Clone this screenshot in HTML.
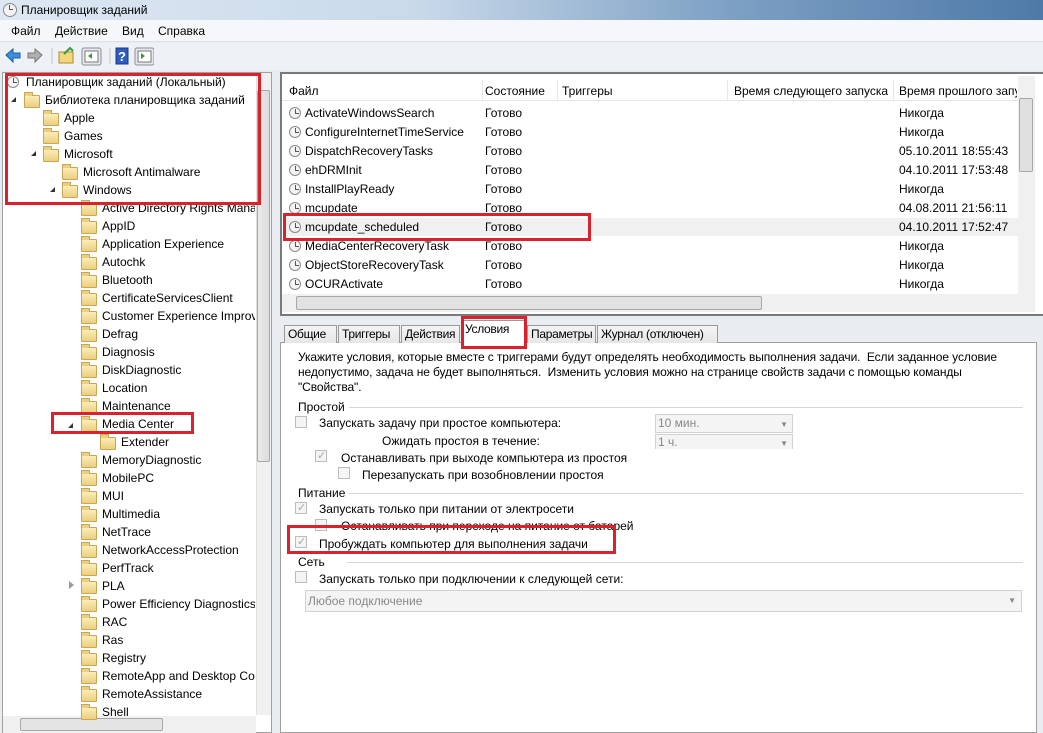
<!DOCTYPE html>
<html><head><meta charset="utf-8">
<style>
*{box-sizing:border-box;margin:0;padding:0}
body{width:1043px;height:733px;overflow:hidden;position:relative;background:#e9edf2;font-family:"Liberation Sans",sans-serif;font-size:12px;color:#000}
.a{position:absolute;white-space:nowrap}
.t{position:absolute;white-space:nowrap;line-height:14px}
.fold{position:absolute;width:16px;height:13px;background:linear-gradient(#fbecb8,#eccf7e);border:1px solid #c9a656;border-radius:1px}
.fold:before{content:"";position:absolute;left:-1px;top:-4px;width:7px;height:3px;background:#eccf7e;border:1px solid #c9a656;border-bottom:none}
.clk{position:absolute;width:12px;height:12px;border-radius:50%;border:1px solid #8a8a8a;background:#f4f4f4}
.clk:after{content:"";position:absolute;left:5px;top:1px;width:3px;height:4px;border-left:1px solid #555;border-bottom:1px solid #555}
.arr{position:absolute;width:0;height:0;border-left:5px solid transparent;border-bottom:5px solid #333}
.red{position:absolute;border:3px solid #d9222c}
.cb{position:absolute;width:12px;height:12px;border:1px solid #bcbcbc;background:#f4f4f4}
.cb.k:after{content:"✓";position:absolute;left:1px;top:-2px;font-size:11px;color:#aaa}
.hl{position:absolute;height:1px;background:#d5d5d5}
.lbl{background:#fff;padding-right:4px;z-index:2}
.combo{position:absolute;border:1px solid #d2d2d2;background:#f4f4f4;color:#888;padding-left:2px;line-height:16px}
.dd{position:absolute;right:4px;top:2px;font-size:8px;color:#888}
</style></head><body>
<div class="a" style="left:0;top:0;width:1043px;height:20px;background:linear-gradient(90deg,#dde8f3 0%,#c9d9ea 40%,#7da0c4 70%,#4e79a8 100%)"></div>
<div class="clk" style="left:3px;top:3px;width:14px;height:14px"></div>
<div class="t" style="left:21px;top:3px;font-size:12px">Планировщик заданий</div>
<div class="a" style="left:0;top:20px;width:1043px;height:22px;background:#f5f7fa;border-bottom:1px solid #dde2e8"></div>
<div class="t" style="left:11px;top:24px">Файл</div>
<div class="t" style="left:55px;top:24px">Действие</div>
<div class="t" style="left:122px;top:24px">Вид</div>
<div class="t" style="left:158px;top:24px">Справка</div>
<div class="a" style="left:0;top:43px;width:1043px;height:27px;background:#eef1f5"></div>
<svg class="a" style="left:4px;top:46px" width="150" height="20">
<path d="M2 9 L9 3 V7 H16 V12 H9 V16 Z" fill="#3b8fde" stroke="#1f5f9e"/>
<path d="M38 9 L31 3 V7 H24 V12 H31 V16 Z" fill="#b0b0b0" stroke="#777"/>
<line x1="48" y1="2" x2="48" y2="18" stroke="#c5c5c5"/>
<rect x="55" y="6" width="14" height="11" fill="#f3d77d" stroke="#b08a30"/>
<path d="M60 8 L66 2 L69 5" stroke="#3a9a3a" stroke-width="2" fill="none"/>
<rect x="78" y="2" width="19" height="17" rx="2" fill="#e4e8ee" stroke="#8a8f96"/>
<rect x="81" y="5" width="13" height="11" fill="#fff" stroke="#777"/>
<path d="M84 10 L88 7 V13 Z" fill="#3a9a3a"/>
<line x1="106" y1="2" x2="106" y2="18" stroke="#c5c5c5"/>
<rect x="112" y="2" width="12" height="16" fill="#2e5cc0" stroke="#1b3a80"/>
<text x="114" y="15" fill="#fff" font-size="13" font-weight="bold" font-family="Liberation Sans">?</text>
<rect x="131" y="2" width="19" height="17" rx="2" fill="#e4e8ee" stroke="#8a8f96"/>
<rect x="134" y="5" width="13" height="11" fill="#fff" stroke="#777"/>
<path d="M137 7 L141 10 L137 13 Z" fill="#3a9a3a"/>
</svg>
<div class="a" style="left:2px;top:72px;width:270px;height:661px;background:#fff;border:1px solid #a0a0a0"></div>
<div class="a" style="left:256px;top:73px;width:15px;height:642px;background:#f0f0f0;border-left:1px solid #e0e0e0"></div>
<div class="a" style="left:257px;top:90px;width:13px;height:372px;background:linear-gradient(90deg,#eaeaea,#dcdcdc);border:1px solid #a8a8a8;border-radius:2px"></div>
<div class="a" style="left:3px;top:716px;width:253px;height:17px;background:#f0f0f0"></div>
<div class="a" style="left:20px;top:718px;width:143px;height:13px;background:#e4e4e4;border:1px solid #a8a8a8;border-radius:2px"></div>

<div class="clk" style="left:7px;top:76px"></div><div class="t" style="left:26px;top:75px">Планировщик заданий (Локальный)</div>
<div class="arr" style="left:11px;top:97px"></div><div class="fold" style="left:24px;top:95px"></div><div class="t" style="left:45px;top:93px">Библиотека планировщика заданий</div>
<div class="fold" style="left:43px;top:113px"></div><div class="t" style="left:64px;top:111px">Apple</div>
<div class="fold" style="left:43px;top:131px"></div><div class="t" style="left:64px;top:129px">Games</div>
<div class="arr" style="left:31px;top:151px"></div><div class="fold" style="left:43px;top:149px"></div><div class="t" style="left:64px;top:147px">Microsoft</div>
<div class="fold" style="left:62px;top:167px"></div><div class="t" style="left:83px;top:165px">Microsoft Antimalware</div>
<div class="arr" style="left:50px;top:187px"></div><div class="fold" style="left:62px;top:185px"></div><div class="t" style="left:83px;top:183px">Windows</div>
<div id="kids"></div>
<div class="red" style="left:5px;top:73px;width:256px;height:132px"></div>
<div class="red" style="left:51px;top:412px;width:143px;height:22px"></div>

<div class="a" style="left:280px;top:72px;width:763px;height:244px;background:#fff;border:2px solid #7a7a7a;border-right:none"></div>
<div class="a" style="left:282px;top:80px;width:736px;height:21px;background:#fff;border-bottom:1px solid #e3e6ea"></div>
<div class="a" style="left:482px;top:80px;width:1px;height:20px;background:#e3e6ea"></div>
<div class="a" style="left:557px;top:80px;width:1px;height:20px;background:#e3e6ea"></div>
<div class="a" style="left:727px;top:80px;width:1px;height:20px;background:#e3e6ea"></div>
<div class="a" style="left:893px;top:80px;width:1px;height:20px;background:#e3e6ea"></div>
<div class="t" style="left:289px;top:84px">Файл</div>
<div class="t" style="left:485px;top:84px">Состояние</div>
<div class="t" style="left:562px;top:84px">Триггеры</div>
<div class="t" style="left:734px;top:84px">Время следующего запуска</div>
<div class="t" style="left:899px;top:84px;width:118px;overflow:hidden">Время прошлого запуска</div>
<div class="a" style="left:1018px;top:76px;width:17px;height:218px;background:#f0f0f0"></div>
<div class="a" style="left:1019px;top:98px;width:14px;height:74px;background:#e0e0e0;border:1px solid #a8a8a8;border-radius:2px"></div>
<div class="a" style="left:283px;top:218px;width:735px;height:18px;background:#f0f0f0"></div>
<div id="rows"></div>
<div class="a" style="left:282px;top:294px;width:753px;height:18px;background:#f0f0f0"></div>
<div class="a" style="left:296px;top:296px;width:466px;height:14px;background:#e2e2e2;border:1px solid #a8a8a8;border-radius:2px"></div>
<div class="red" style="left:283px;top:213px;width:308px;height:28px"></div>

<div class="a" style="left:280px;top:342px;width:757px;height:391px;background:#fff;border:1px solid #a0a0a0"></div>
<div id="tabs"></div>
<div class="red" style="left:461px;top:316px;width:66px;height:33px"></div>

<div class="t" style="left:298px;top:350px;line-height:15px;font-size:12px;letter-spacing:-0.1px">Укажите условия, которые вместе с триггерами будут определять необходимость выполнения задачи.&nbsp; Если заданное условие<br>недопустимо, задача не будет выполняться.&nbsp; Изменить условия можно на странице свойств задачи с помощью команды<br>"Свойства".</div>
<div class="hl" style="left:333px;top:407px;width:690px"></div><div class="t lbl" style="left:298px;top:400px">Простой</div>
<div class="cb" style="left:295px;top:416px"></div><div class="t" style="left:319px;top:416px">Запускать задачу при простое компьютера:</div>
<div class="t" style="left:382px;top:434px">Ожидать простоя в течение:</div>
<div class="combo" style="left:655px;top:414px;width:138px;height:19px">10 мин.<span class="dd">▼</span></div>
<div class="combo" style="left:655px;top:434px;width:138px;height:15px;line-height:14px;border-bottom:none">1 ч.<span class="dd">▼</span></div>
<div class="cb k" style="left:315px;top:450px"></div><div class="t" style="left:341px;top:451px">Останавливать при выходе компьютера из простоя</div>
<div class="cb" style="left:338px;top:467px"></div><div class="t" style="left:362px;top:468px">Перезапускать при возобновлении простоя</div>
<div class="hl" style="left:333px;top:493px;width:690px"></div><div class="t lbl" style="left:298px;top:486px">Питание</div>
<div class="cb k" style="left:295px;top:502px"></div><div class="t" style="left:319px;top:502px">Запускать только при питании от электросети</div>
<div class="cb" style="left:315px;top:519px"></div><div class="t" style="left:341px;top:519px">Останавливать при переходе на питание от батарей</div>
<div class="cb k" style="left:295px;top:536px"></div><div class="t" style="left:319px;top:537px">Пробуждать компьютер для выполнения задачи</div>
<div class="red" style="left:287px;top:525px;width:329px;height:29px"></div>
<div class="hl" style="left:347px;top:562px;width:676px"></div><div class="t lbl" style="left:298px;top:555px">Сеть</div>
<div class="cb" style="left:295px;top:571px"></div><div class="t" style="left:319px;top:572px">Запускать только при подключении к следующей сети:</div>
<div class="combo" style="left:305px;top:590px;width:717px;height:22px;line-height:20px">Любое подключение<span style="position:absolute;right:5px;top:0;font-size:8px">▼</span></div>

<script>
var k=["Active Directory Rights Management","AppID","Application Experience","Autochk","Bluetooth","CertificateServicesClient","Customer Experience Improvement","Defrag","Diagnosis","DiskDiagnostic","Location","Maintenance","Media Center","Extender","MemoryDiagnostic","MobilePC","MUI","Multimedia","NetTrace","NetworkAccessProtection","PerfTrack","PLA","Power Efficiency Diagnostics","RAC","Ras","Registry","RemoteApp and Desktop Connections","RemoteAssistance","Shell"];
var h="";k.forEach(function(n,i){var y=208+18*i;var ix=n=="Extender"?100:81,tx=n=="Extender"?121:102;
h+='<div class="fold" style="left:'+ix+'px;top:'+(y-5)+'px"></div><div class="t" style="left:'+tx+'px;top:'+(y-7)+'px;max-width:'+(255-tx)+'px;overflow:hidden">'+n+'</div>';
if(n=="Media Center")h+='<div class="arr" style="left:68px;top:'+(y-1)+'px"></div>';
if(n=="PLA")h+='<div class="a" style="left:69px;top:'+(y-5)+'px;width:0;height:0;border-left:5px solid #999;border-top:4px solid transparent;border-bottom:4px solid transparent"></div>';});
document.getElementById("kids").outerHTML=h;
var r=[["ActivateWindowsSearch","Никогда"],["ConfigureInternetTimeService","Никогда"],["DispatchRecoveryTasks","05.10.2011 18:55:43"],["ehDRMInit","04.10.2011 17:53:48"],["InstallPlayReady","Никогда"],["mcupdate","04.08.2011 21:56:11"],["mcupdate_scheduled","04.10.2011 17:52:47"],["MediaCenterRecoveryTask","Никогда"],["ObjectStoreRecoveryTask","Никогда"],["OCURActivate","Никогда"]];
h="";r.forEach(function(a,i){var y=113+19*i;h+='<div class="clk" style="left:289px;top:'+(y-6)+'px"></div><div class="t" style="left:305px;top:'+(y-7)+'px">'+a[0]+'</div><div class="t" style="left:485px;top:'+(y-7)+'px">Готово</div><div class="t" style="left:899px;top:'+(y-7)+'px">'+a[1]+'</div>';});
document.getElementById("rows").outerHTML=h;
var t=[["Общие",284,53],["Триггеры",338,62],["Действия",401,59],["Условия",461,66],["Параметры",527,69],["Журнал (отключен)",597,121]];
h="";t.forEach(function(a){var sel=a[0]=="Условия";h+='<div class="a" style="left:'+a[1]+'px;top:'+(sel?320:325)+'px;width:'+a[2]+'px;height:'+(sel?23:18)+'px;background:'+(sel?'#fff':'linear-gradient(#f4f4f4,#e6e6e6)')+';border:1px solid #9a9a9a;border-bottom:none;padding-left:3px;line-height:17px;overflow:hidden;letter-spacing:-0.3px">'+a[0]+'</div>';});
document.getElementById("tabs").outerHTML=h;
</script>
</body></html>
